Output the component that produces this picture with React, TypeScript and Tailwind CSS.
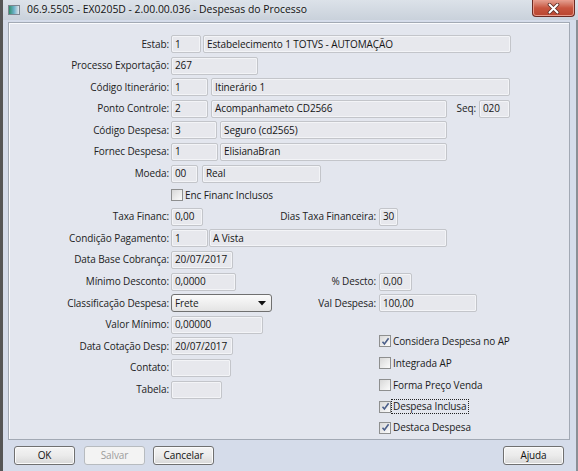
import React from "react";

// Small sunken text box used across the form
const Field = ({ className, value = "" }: { className: string; value?: string }) => (
  <div
    className={`h-[18px] shrink-0 border border-[#c3c5ca] bg-[#e7e8ed] rounded-[2px] shadow-[inset_0_0_0_1px_#f3f4f7] pl-[3px] flex items-center whitespace-nowrap overflow-hidden text-[#151515] ${className}`}
  >
    {value}
  </div>
);

const Check = ({ checked = false }: { checked?: boolean }) => (
  <div className="w-[12px] h-[12px] shrink-0 border border-[#8e8f8f] bg-gradient-to-br from-[#d8d8d8] to-[#fcfcfc] flex items-center justify-center">
    {checked && (
      <svg width="9" height="9" viewBox="0 0 9 9">
        <path d="M1.5 4.8 L3.4 7 L7.6 1.3" fill="none" stroke="#4b5f8a" strokeWidth="1.6" />
      </svg>
    )}
  </div>
);

const CheckItem = ({
  label,
  checked,
  focused,
  className = "",
}: {
  label: string;
  checked?: boolean;
  focused?: boolean;
  className?: string;
}) => (
  <div className={`flex items-center h-[18px] ${className}`}>
    <Check checked={checked} />
    <span className={`ml-[1px] px-[1px] leading-[13px] ${focused ? "outline outline-1 outline-dotted outline-[#222]" : ""}`}>
      {label}
    </span>
  </div>
);

const Row = ({ label, children }: { label?: string; children?: React.ReactNode }) => (
  <div className="flex items-center h-[18px]">
    <div className="w-[160px] shrink-0 text-right text-[#222]">{label ? `${label}:` : ""}</div>
    <div className="ml-[2px] flex items-center">{children}</div>
  </div>
);

// Left block spans up to the second column at x=379
const Split = ({ left, label }: { left?: React.ReactNode; label?: string }) => (
  <div className="w-[208px] shrink-0 flex items-center justify-between">
    <div className="flex items-center">{left}</div>
    {label && <span className="pr-[3px] text-[#222]">{label}:</span>}
  </div>
);

const Button = ({ label, disabled }: { label: string; disabled?: boolean }) => (
  <button
    className={`h-[19px] w-[61px] rounded-[3px] border text-[10px] flex items-center justify-center ${
      disabled
        ? "border-[#b7bbbf] bg-[#f3f3f3] text-[#9c9c9c]"
        : "border-[#707070] bg-gradient-to-b from-[#f4f4f4] via-[#ebebeb] to-[#d8d8d8] text-[#111] shadow-[inset_0_0_0_1px_#fbfbfb]"
    }`}
  >
    {label}
  </button>
);

export default function App() {
  return (
    <div className="w-[578px] h-[471px] flex flex-col bg-[#d5dcea] border-l-[3px] border-l-[#565656] font-['Open_Sans',sans-serif] text-[10px] tracking-[-0.1px] text-[#1b1b1b] overflow-hidden">
      {/* title bar */}
      <div className="h-[20px] shrink-0 relative flex items-center bg-gradient-to-b from-[#dce2e9] to-[#c9d1db]">
        <div className="ml-[5px] w-[12px] h-[10px] border border-[#7d8690] bg-gradient-to-r from-[#2f8f6a] via-[#6ab0c8] to-[#dfe4ea]" />
        <span className="ml-[7px] text-[10.4px] tracking-normal text-[#111] [text-shadow:0_0_6px_#ffffff]">
          06.9.5505 - EX0205D - 2.00.00.036 - Despesas do Processo
        </span>
        <div className="absolute right-[3px] top-0 w-[43px] h-[17px] rounded-b-[4px] border border-t-0 border-[#6b2a22] bg-gradient-to-b from-[#e3a193] via-[#c8553f] to-[#b8452f] flex items-center justify-center shadow-[inset_0_0_0_1px_#e89a8a]">
          <svg width="13" height="11" viewBox="0 0 13 11">
            <path d="M2.5 1.5 L10.5 9.5 M10.5 1.5 L2.5 9.5" stroke="#5b2b24" strokeWidth="3.6" strokeLinecap="round" />
            <path d="M2.5 1.5 L10.5 9.5 M10.5 1.5 L2.5 9.5" stroke="#ffffff" strokeWidth="2" strokeLinecap="round" />
          </svg>
        </div>
      </div>

      <div className="flex-1 flex flex-col pl-[5px] pr-[6px] border-r-[2px] border-r-[#8a8f96]">
        {/* form panel */}
        <div className="mt-[2px] h-[418px] shrink-0 border border-[#a2a9b4] bg-[#e3e6ee] shadow-[inset_1px_1px_0_#fafbfd] pt-[12px] flex flex-col gap-[3.6px]">
          <Row label="Estab">
            <Field className="w-[30px]" value="1" />
            <Field className="ml-[2px] w-[308px]" value="Estabelecimento 1 TOTVS - AUTOMAÇÃO" />
          </Row>
          <Row label="Processo Exportação">
            <Field className="w-[87px]" value="267" />
          </Row>
          <Row label="Código Itinerário">
            <Field className="w-[37px]" value="1" />
            <Field className="ml-[3px] w-[299px]" value="Itinerário 1" />
          </Row>
          <Row label="Ponto Controle">
            <Field className="w-[37px]" value="2" />
            <Field className="ml-[3px] w-[236px]" value="Acompanhameto  CD2566" />
            <span className="w-[32px] text-right pr-[3px] text-[#222]">Seq:</span>
            <Field className="w-[31px]" value="020" />
          </Row>
          <Row label="Código Despesa">
            <Field className="w-[46px]" value="3" />
            <Field className="ml-[3px] w-[227px]" value="Seguro (cd2565)" />
          </Row>
          <Row label="Fornec Despesa">
            <Field className="w-[47px]" value="1" />
            <Field className="ml-[2px] w-[227px]" value="ElisianaBran" />
          </Row>
          <Row label="Moeda">
            <Field className="w-[27px]" value="00" />
            <Field className="ml-[4px] w-[119px]" value="Real" />
          </Row>
          <Row>
            <CheckItem label="Enc Financ Inclusos" />
          </Row>
          <Row label="Taxa Financ">
            <Split left={<Field className="w-[32px]" value="0,00" />} label="Dias Taxa Financeira" />
            <Field className="w-[19px]" value="30" />
          </Row>
          <Row label="Condição Pagamento">
            <Field className="w-[37px]" value="1" />
            <Field className="ml-[1px] w-[238px]" value="A Vista" />
          </Row>
          <Row label="Data Base Cobrança">
            <Field className="w-[62px]" value="20/07/2017" />
          </Row>
          <Row label="Mínimo Desconto">
            <Split left={<Field className="w-[65px]" value="0,0000" />} label="% Descto" />
            <Field className="w-[33px]" value="0,00" />
          </Row>
          <Row label="Classificação Despesa">
            <Split
              left={
                <div className="w-[101px] h-[18px] rounded-[3px] border border-[#707070] bg-gradient-to-b from-[#fbfbfb] to-[#e4e4e4] flex items-center justify-between pl-[3px] pr-[5px]">
                  <span>Frete</span>
                  <svg width="8" height="5" viewBox="0 0 8 5">
                    <path d="M0 0 H8 L4 4.5 Z" fill="#111" />
                  </svg>
                </div>
              }
              label="Val Despesa"
            />
            <Field className="w-[98px]" value="100,00" />
          </Row>
          <Row label="Valor Mínimo">
            <Field className="w-[92px]" value="0,00000" />
          </Row>
          {/* option boxes on the right sit a few pixels above the field rows */}
          <Row label="Data Cotação Desp">
            <Split left={<Field className="w-[62px]" value="20/07/2017" />} />
            <CheckItem label="Considera Despesa no AP" checked className="mb-[10px]" />
          </Row>
          <Row label="Contato">
            <Split left={<Field className="w-[60px]" />} />
            <CheckItem label="Integrada AP" className="mb-[9px]" />
          </Row>
          <Row label="Tabela">
            <Split left={<Field className="w-[51px]" />} />
            <CheckItem label="Forma Preço Venda" className="mb-[9px]" />
          </Row>
          <Row>
            <Split />
            <CheckItem label="Despesa Inclusa" checked focused className="mb-[9px]" />
          </Row>
          <Row>
            <Split />
            <CheckItem label="Destaca Despesa" checked className="mb-[10px]" />
          </Row>
        </div>

        {/* button bar */}
        <div className="flex items-center pt-[6px] pl-[6px] pr-[6px]">
          <Button label="OK" />
          <div className="ml-[9px]">
            <Button label="Salvar" disabled />
          </div>
          <div className="ml-[8px]">
            <Button label="Cancelar" />
          </div>
          <div className="ml-auto">
            <Button label="Ajuda" />
          </div>
        </div>
      </div>
    </div>
  );
}
